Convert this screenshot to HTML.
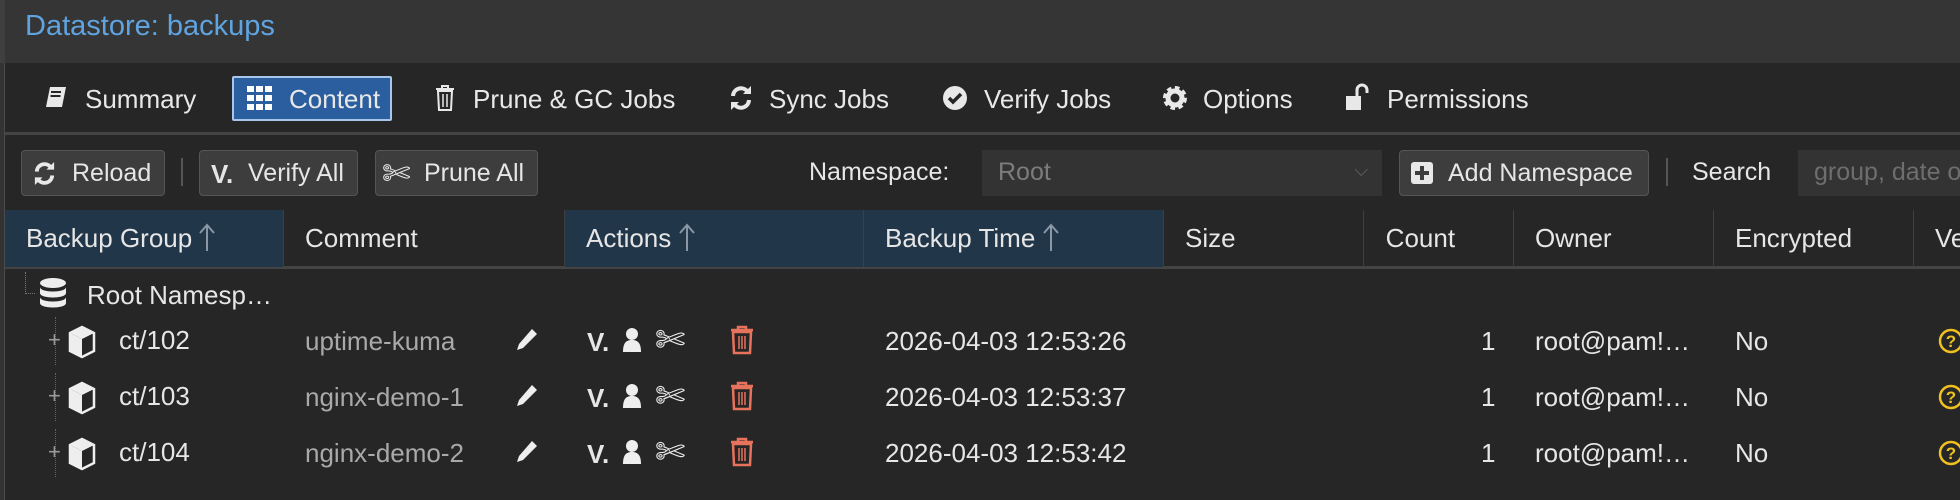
<!DOCTYPE html>
<html><head><meta charset="utf-8"><style>
*{box-sizing:border-box;margin:0;padding:0}
body{width:1960px;height:500px;background:#262626;font-family:"Liberation Sans",sans-serif;color:#e6e6e6;position:relative;overflow:hidden;font-size:26px}
.abs{position:absolute}
.title{left:0;top:0;width:1960px;height:63px;background:#353535;border-left:5px solid #3f3f3f}
.title span{position:absolute;left:20px;top:10px;font-size:29px;color:#5fa3e0}
.tabs{left:5px;top:63px;width:1955px;height:72px;background:#262626;border-bottom:3px solid #444}
.tab{position:absolute;top:21px;white-space:nowrap;color:#e8e8e8}
.content{left:227px;top:13px;width:160px;height:45px;background:#2a5e9f;border:2px solid #a7c6ea;border-radius:2px}
.btn{position:absolute;top:150px;height:46px;background:#3d3d3d;border:1px solid #555;border-radius:4px;white-space:nowrap;padding:8px 0 0 12px;font-size:25px}
.hdr{left:5px;top:210px;width:1955px;height:59px;background:#262626;border-bottom:3px solid #444}
.hc{position:absolute;top:0;height:57px;border-right:1px solid #3f3f3f;padding:13px 0 0 21px;white-space:nowrap;color:#e6e6e6}
.s{background:#223649}
.cell{position:absolute;white-space:nowrap}
.gray{color:#a9a9a9}
.lb{left:0;top:63px;width:5px;height:437px;background:#333;border-right:1px solid #4a4a4a}
</style></head><body>
<div class="abs title"><span>Datastore: backups</span></div>
<div class="abs lb"></div>
<div class="abs tabs">
 <svg class="abs" style="left:40px;top:23px" width="22" height="24" viewBox="0 0 22 24"><path d="M5 1h16l-4 20H1z" fill="#e8e8e8"/><path d="M6 6h10M5.5 10h10" stroke="#262626" stroke-width="2"/></svg>
 <div class="tab" style="left:80px">Summary</div>
 <div class="abs content"></div>
 <svg class="abs" style="left:242px;top:23px" width="26" height="24" viewBox="0 0 26 24"><g fill="#fff"><rect x="0" y="0" width="7" height="6"/><rect x="9" y="0" width="7" height="6"/><rect x="18" y="0" width="7" height="6"/><rect x="0" y="9" width="7" height="6"/><rect x="9" y="9" width="7" height="6"/><rect x="18" y="9" width="7" height="6"/><rect x="0" y="18" width="7" height="6"/><rect x="9" y="18" width="7" height="6"/><rect x="18" y="18" width="7" height="6"/></g></svg>
 <div class="tab" style="left:284px">Content</div>
 <svg class="abs" style="left:430px;top:22px" width="20" height="26" viewBox="0 0 20 26"><path d="M1 4h18M7 4V1h6v3M3 6h14l-1 19H4z" fill="none" stroke="#e8e8e8" stroke-width="2"/><path d="M8 9v13M12 9v13" stroke="#e8e8e8" stroke-width="1.5"/></svg>
 <div class="tab" style="left:468px">Prune &amp; GC Jobs</div>
 <svg class="abs" style="left:724px;top:22px" width="24" height="26" viewBox="0 0 24 26"><path d="M4 11a8 8 0 0 1 14-5M20 15a8 8 0 0 1-14 5" fill="none" stroke="#e8e8e8" stroke-width="4"/><path d="M14 9h8V1zM10 17H2v8z" fill="#e8e8e8"/></svg>
 <div class="tab" style="left:764px">Sync Jobs</div>
 <svg class="abs" style="left:937px;top:22px" width="26" height="26" viewBox="0 0 26 26"><circle cx="13" cy="13" r="12" fill="#e8e8e8"/><path d="M7 13l4 4 8-8" fill="none" stroke="#262626" stroke-width="3.5"/></svg>
 <div class="tab" style="left:979px">Verify Jobs</div>
 <svg class="abs" style="left:1157px;top:22px" width="26" height="26" viewBox="0 0 26 26"><circle cx="13" cy="13" r="9" fill="none" stroke="#e8e8e8" stroke-width="6" stroke-dasharray="4 3"/><circle cx="13" cy="13" r="7" fill="none" stroke="#e8e8e8" stroke-width="5"/></svg>
 <div class="tab" style="left:1198px">Options</div>
 <svg class="abs" style="left:1340px;top:20px" width="28" height="28" viewBox="0 0 28 28"><rect x="1" y="13" width="15" height="14" fill="#e8e8e8"/><path d="M12 13V7a5 5 0 0 1 10 0v3" fill="none" stroke="#e8e8e8" stroke-width="3"/></svg>
 <div class="tab" style="left:1382px">Permissions</div>
</div>
<div class="btn" style="left:21px;width:144px;padding-left:50px">Reload</div>
<svg class="abs" style="left:32px;top:161px" width="25" height="25" viewBox="0 0 24 26"><path d="M4 11a8 8 0 0 1 14-5M20 15a8 8 0 0 1-14 5" fill="none" stroke="#e8e8e8" stroke-width="4"/><path d="M14 9h8V1zM10 17H2v8z" fill="#e8e8e8"/></svg>
<div class="abs" style="left:181px;top:158px;width:2px;height:28px;background:#555"></div>
<div class="btn" style="left:199px;width:159px;padding-left:48px">Verify All</div>
<div class="abs" style="left:211px;top:159px;font-weight:bold;font-size:26px">V.</div>
<div class="btn" style="left:375px;width:163px;padding-left:48px">Prune All</div>
<div class="abs" style="left:382px;top:154px;font-size:34px;color:#e8e8e8">✄</div>
<div class="abs" style="left:809px;top:158px;font-size:25px">Namespace:</div>
<div class="abs" style="left:982px;top:150px;width:400px;height:46px;background:#333"><span style="position:absolute;left:16px;top:8px;color:#7c7c7c;font-size:25px">Root</span><span style="position:absolute;right:14px;top:10px;color:#666;font-size:18px">⌵</span></div>
<div class="btn" style="left:1399px;width:250px;padding-left:48px">Add Namespace</div>
<svg class="abs" style="left:1411px;top:162px" width="22" height="22" viewBox="0 0 22 22"><rect width="22" height="22" rx="3" fill="#e8e8e8"/><path d="M11 4v14M4 11h14" stroke="#3d3d3d" stroke-width="4"/></svg>
<div class="abs" style="left:1666px;top:158px;width:2px;height:28px;background:#555"></div>
<div class="abs" style="left:1692px;top:158px;font-size:25px">Search</div>
<div class="abs" style="left:1798px;top:150px;width:162px;height:46px;background:#333"><span style="position:absolute;left:16px;top:8px;color:#6e6e6e;white-space:nowrap;font-size:25px">group, date or</span></div>
<div class="abs hdr">
 <div class="hc s" style="left:0;width:279px">Backup Group <svg width="16" height="28" style="vertical-align:-4px"><path d="M8 28V3M1 10l7-8 7 8" fill="none" stroke="#8a97a6" stroke-width="2"/></svg></div>
 <div class="hc" style="left:279px;width:281px">Comment</div>
 <div class="hc s" style="left:560px;width:299px">Actions <svg width="16" height="28" style="vertical-align:-4px"><path d="M8 28V3M1 10l7-8 7 8" fill="none" stroke="#8a97a6" stroke-width="2"/></svg></div>
 <div class="hc s" style="left:859px;width:300px">Backup Time <svg width="16" height="28" style="vertical-align:-4px"><path d="M8 28V3M1 10l7-8 7 8" fill="none" stroke="#8a97a6" stroke-width="2"/></svg></div>
 <div class="hc" style="left:1159px;width:200px">Size</div>
 <div class="hc" style="left:1359px;width:150px;padding-left:0">&nbsp;&nbsp;&nbsp;Count</div>
 <div class="hc" style="left:1509px;width:200px">Owner</div>
 <div class="hc" style="left:1709px;width:200px">Encrypted</div>
 <div class="hc" style="left:1909px;width:60px">Ve</div>
</div>
<div class="abs" style="left:25px;top:272px;width:10px;height:22px;border-left:1px dotted #777;border-bottom:1px dotted #777"></div>
<svg class="abs" style="left:38px;top:278px" width="30" height="34" viewBox="0 0 30 34"><g fill="#eee"><ellipse cx="15" cy="5" rx="13" ry="5"/><path d="M2 9c0 6 26 6 26 0v6c0 6-26 6-26 0z"/><path d="M2 19c0 6 26 6 26 0v6c0 6-26 6-26 0z"/></g></svg>
<div class="cell" style="left:87px;top:280px">Root Namesp…</div>
<script>
var rows=[["ct/102","uptime-kuma","2026-04-03 12:53:26",341],["ct/103","nginx-demo-1","2026-04-03 12:53:37",397],["ct/104","nginx-demo-2","2026-04-03 12:53:42",453]];
var h="";
rows.forEach(function(r){var y=r[3];
h+='<div class="abs" style="left:55px;top:'+(y-24)+'px;height:48px;border-left:1px dotted #666"></div>';
h+='<div class="cell" style="left:48px;top:'+(y-14)+'px;color:#999;font-size:22px">+</div>';
h+='<svg class="abs" style="left:67px;top:'+(y-16)+'px" width="30" height="34" viewBox="0 0 30 34"><path d="M15 2l12 6v18l-12 6-12-6V8z" fill="none" stroke="#eee" stroke-width="2.5"/><path d="M15 2l12 6-12 6-12-6z" fill="#eee"/><path d="M3 8l12 6v18l-12-6z" fill="#eee"/></svg>';
h+='<div class="cell" style="left:119px;top:'+(y-16)+'px">'+r[0]+'</div>';
h+='<div class="cell gray" style="left:305px;top:'+(y-15)+'px">'+r[1]+'</div>';
h+='<svg class="abs" style="left:515px;top:'+(y-14)+'px" width="24" height="26" viewBox="0 0 24 26"><path d="M17 2l5 5L8 21l-6 2 2-6z" fill="#eee"/></svg>';
h+='<div class="cell" style="left:587px;top:'+(y-14)+'px;font-weight:bold;font-size:26px">V.</div>';
h+='<svg class="abs" style="left:622px;top:'+(y-14)+'px" width="20" height="26" viewBox="0 0 20 26"><circle cx="10" cy="7" r="6" fill="#eee"/><path d="M1 25c0-9 3-12 9-12s9 3 9 12z" fill="#eee"/></svg>';
h+='<div class="cell" style="left:655px;top:'+(y-22)+'px;font-size:36px;color:#eee">✄</div>';
h+='<svg class="abs" style="left:730px;top:'+(y-16)+'px" width="24" height="30" viewBox="0 0 24 30"><path d="M1 5h22M8 5V2h8v3M3 7h18l-1 21H4z" fill="none" stroke="#e8735d" stroke-width="2.5"/><path d="M9 11v13M12 11v13M15 11v13" stroke="#e8735d" stroke-width="1.5"/></svg>';
h+='<div class="cell" style="left:885px;top:'+(y-15)+'px">'+r[2]+'</div>';
h+='<div class="cell" style="left:1481px;top:'+(y-15)+'px">1</div>';
h+='<div class="cell" style="left:1535px;top:'+(y-15)+'px">root@pam!…</div>';
h+='<div class="cell" style="left:1735px;top:'+(y-15)+'px">No</div>';
h+='<svg class="abs" style="left:1938px;top:'+(y-13)+'px" width="26" height="26" viewBox="0 0 26 26"><circle cx="13" cy="13" r="11" fill="none" stroke="#f0c020" stroke-width="2.5"/><text x="13" y="19" text-anchor="middle" font-family="Liberation Sans" font-weight="bold" font-size="17" fill="#f0c020">?</text></svg>';
});
document.write(h);
</script>
</body></html>
